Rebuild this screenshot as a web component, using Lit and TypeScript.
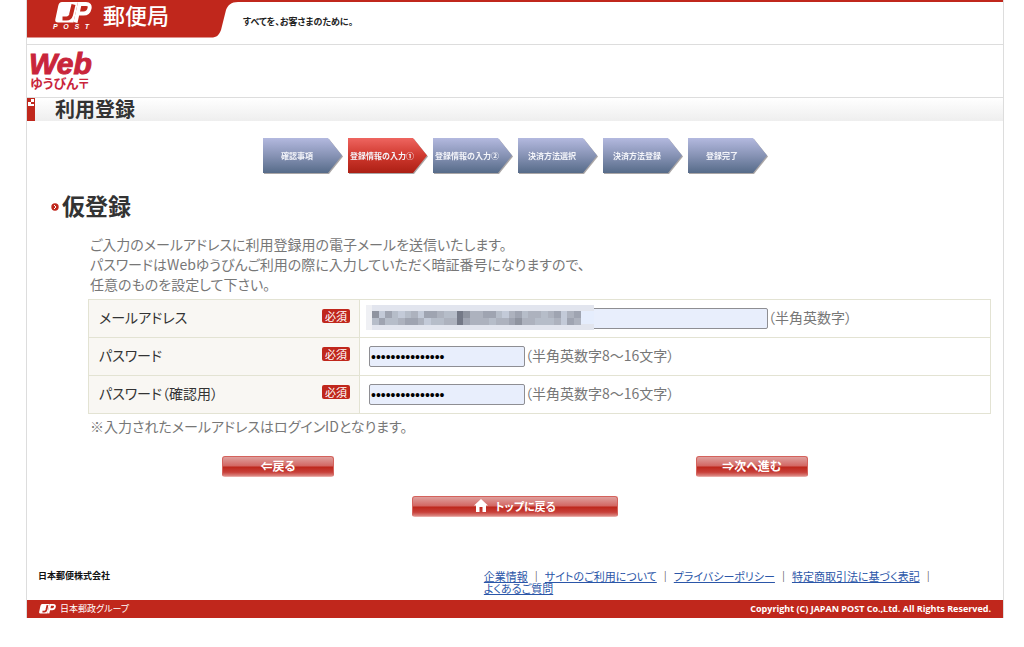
import { LitElement, html, css, svg } from "lit";
import { customElement, property } from "lit/decorators.js";

interface Step {
  label: string;
  current?: boolean;
}

const STEPS: Step[] = [
  { label: "確認事項" },
  { label: "登録情報の入力①", current: true },
  { label: "登録情報の入力②" },
  { label: "決済方法選択" },
  { label: "決済方法登録" },
  { label: "登録完了" },
];

const FOOTER_LINKS = [
  "企業情報",
  "サイトのご利用について",
  "プライバシーポリシー",
  "特定商取引法に基づく表記",
];

// Grey levels of the mosaic that hides the address, one digit per cell (0 = lightest).
const MOSAIC = ["51421231443226533442134233234134", "24223443122336433323345332223143"];
const SHADES = ["#dde0e9", "#c3cad8", "#b6bdc9", "#adb2be", "#9fa4b1", "#8f94a0", "#747987"];

@customElement("jp-mark")
class JpMark extends LitElement {
  static styles = css`
    :host { display: block; }
    svg { display: block; width: 100%; height: auto; }
  `;
  render() {
    return html`
      <svg viewBox="0 0 37 21" aria-hidden="true">
        <path fill="#fff" d="M7 0H23L18.5 20.5H3Q-.5 20.5 .4 17L3.2 4Q4 0 7 0Z" />
        <path fill="none" stroke="#c0271c" stroke-width="4" d="M18.500 2.500L16 13Q15 16.500 11.500 16.500H7.500" />
        <path fill="none" stroke="#fff" stroke-width="4" d="M20.500 20.500L24.600 2H31Q35.500 2 34.500 6.500Q33.500 11.500 28.500 11.500H23" />
      </svg>`;
  }
}

@customElement("step-arrow")
class StepArrow extends LitElement {
  @property() label = "";
  @property({ type: Boolean }) current = false;
  static styles = css`
    :host { display: block; filter: drop-shadow(1px 1px 0 #aaa6a6); }
    .arrow {
      display: flex;
      align-items: center;
      justify-content: center;
      width: 79px;
      height: 35px;
      padding: 1px 11px 0 0;
      box-sizing: border-box;
      clip-path: polygon(0 0, 65px 0, 100% 50%, 65px 100%, 0 100%);
      background: linear-gradient(#b3b9df, #8793b5 50%, #566b89);
      color: #f4f5fa;
      font-size: 8px;
      line-height: 12px;
      font-weight: 700;
      font-feature-settings: normal;
      white-space: nowrap;
    }
    .current { background: linear-gradient(#ee6560, #d0392f 50%, #ac1f14); }
  `;
  render() {
    return html`<span class="arrow ${this.current ? "current" : ""}">${this.label}</span>`;
  }
}

@customElement("app-root")
class AppRoot extends LitElement {
  static styles = css`
    :host {
      display: block;
      background: #fff;
      color: #777;
      font-family: "Noto Sans CJK JP", sans-serif;
      font-feature-settings: "palt";
      font-size: 14px;
      line-height: 20px;
    }
    * { box-sizing: border-box; }
    .page { margin: 0 20px 0 26px; border: solid #ddd; border-width: 0 1px; }
    .brand { display: grid; grid-template-columns: 216px 1fr; height: 45px; border-bottom: 1px solid #ddd; background: linear-gradient(#c0271c 2px, #fff 2px); }
    .tab { display: grid; }
    .tab > * { grid-area: 1 / 1; }
    .tab-shape { display: block; width: 211px; height: 38px; }
    .tab-content { display: flex; padding: 2px 0 0 26px; color: #fff; }
    .post { width: 38px; }
    .post-mark { width: 37px; margin-left: 2px; }
    .post-name { font: italic 700 7px/8px "Liberation Sans", sans-serif; display: flex; justify-content: space-between; padding-right: 2px; }
    .office { font-size: 22px; line-height: 24px; font-weight: 500; margin-left: 12px; }
    .slogan { margin: 16px 0 0; color: #222; font-size: 9px; line-height: 12px; font-weight: 700; }
    .service { height: 52px; padding: 5px 0 0 2px; color: #c9253b; }
    .web { font: italic 700 30px/27px "Liberation Sans", sans-serif; -webkit-text-stroke: 1px #c9253b; }
    .yubin { display: block; font-size: 13px; line-height: 11px; font-weight: 700; padding-left: 1px; }
    .title { display: flex; height: 24px; border-top: 1px solid #ddd; background: linear-gradient(#fff, #eee); }
    .flag { width: 8px; height: 23px; }
    h1 { margin: 0 0 0 20px; color: #333; font-size: 20px; line-height: 22px; font-weight: 700; }
    .steps { display: flex; justify-content: center; gap: 6px; margin: 0; padding: 17px 0 0; list-style: none; }
    h2 { display: flex; align-items: center; gap: 3px; margin: 14px 0 0 24px; color: #333; font-size: 23px; line-height: 36px; font-weight: 700; }
    .bullet { width: 8px; height: 8px; margin-top: 3px; }
    .body { margin: 11px 12px 0 61px; }
    p { margin: 0; }
    .lead, .note { padding-left: 2px; }
    table { width: 100%; margin-top: 5px; border-collapse: collapse; }
    th, td { border: 1px solid #e3e3d3; height: 38px; padding: 0 9px; text-align: left; font-weight: 400; }
    th { width: 271px; padding: 0 9px 3px 10px; background: #f9f7f3; color: #333; }
    .label { display: flex; justify-content: space-between; align-items: center; }
    .required { background: #c0271c; color: #fff; border-radius: 2px; font-size: 11px; line-height: 14px; padding: 0 3px; margin-bottom: 3px; font-feature-settings: normal; }
    .field { display: flex; align-items: center; position: relative; }
    .hint { margin-bottom: 3px; }
    input { width: 156px; height: 21px; padding: 1px; border: 1px solid #8e8e93; border-radius: 2px; background: #e8eefc; color: #000; font: 14px "Liberation Sans", sans-serif; }
    .mail { width: 399px; min-width: 0; }
    .mosaic { position: absolute; left: -3px; top: -2px; width: 228px; height: 25px; }
    .note { margin-top: 2px; }
    .actions { display: grid; grid-template-columns: 1fr 1fr; justify-items: center; padding: 0 14px; margin-top: 20px; }
    .top { display: flex; justify-content: center; margin-top: 19px; }
    button {
      display: flex; align-items: center; justify-content: center; gap: 7px;
      width: 112px; height: 21px; padding: 0 0 2px; border: 1px solid #d4625c; border-bottom-color: #e9aaa6; border-radius: 3px;
      background: linear-gradient(#dfa09e, #d26561 48%, #bd261b 52%, #c8403a 80%, #dc8984);
      color: #fff; font-family: inherit; font-feature-settings: inherit; font-size: 12px; line-height: 16px; font-weight: 700;
    }
    .wide { width: 206px; font-size: 11px; }
    .home { width: 14px; height: 13px; margin-bottom: 1px; }
    .foot { display: grid; grid-template-columns: 22fr 25fr; height: 83px; padding-top: 53px; }
    .company { color: #111; font-size: 9px; line-height: 12px; font-weight: 700; padding-left: 11px; }
    .links { font-size: 11px; line-height: 12px; }
    a { color: #2b56a8; text-decoration: underline; white-space: nowrap; }
    .bar { margin: 0 3px; color: #333; font-weight: 700; }
    .legal { display: flex; align-items: center; height: 18px; padding: 0 12px; background: #c0271c; color: #fff; font-size: 9px; line-height: 12px; }
    .legal-mark { width: 17px; margin-right: 4px; }
    .copyright { margin-left: auto; font: 700 9px/12px "Open Sans", sans-serif; }
  `;

  private renderMosaic() {
    return html`<svg class="mosaic" viewBox="0 0 228 25" preserveAspectRatio="none" shape-rendering="crispEdges" aria-hidden="true">
      <rect width="228" height="25" fill="#e2e5ee" />
      <rect width="6" height="25" fill="#eff0f4" />
      <rect x="215" y="6" width="13" height="13" fill="#e5edfd" />
      ${MOSAIC.map((row, r) =>
        [...row].map((c, i) => svg`<rect x=${6 + i * 6.5} y=${6 + r * 6.5} width="7" height="7" fill=${SHADES[Number(c)]} />`)
      )}
    </svg>`;
  }

  private renderPassword(id: string, label: string) {
    return html`<tr>
      <th scope="row"><span class="label"><label for=${id}>${label}</label><span class="required">必須</span></span></th>
      <td><span class="field"><input id=${id} type="password" value="abcdefghijklmno" /><span class="hint">（半角英数字8～16文字）</span></span></td>
    </tr>`;
  }

  render() {
    return html`
      <div class="page">
        <header>
          <div class="brand">
            <div class="tab">
              <svg class="tab-shape" viewBox="0 0 211 38" aria-hidden="true">
                <path fill="#c0271c" d="M0 0H211V2C204 2 201 5 199 10L194 30C192 35 190 37.500 184 37.500H0Z" />
              </svg>
              <div class="tab-content">
                <div class="post">
                  <jp-mark class="post-mark"></jp-mark>
                  <span class="post-name"><span>P</span><span>O</span><span>S</span><span>T</span></span>
                </div>
                <span class="office">郵便局</span>
              </div>
            </div>
            <p class="slogan">すべてを、お客さまのために。</p>
          </div>
          <div class="service"><div class="web">Web</div><span class="yubin">ゆうびん〒</span></div>
          <div class="title">
            <svg class="flag" viewBox="0 0 8 23" aria-hidden="true">
              <path fill="#c0271c" d="M0 0H8V23H0Z" />
              <path fill="#fff" d="M4 1H7V4H4ZM1 4H4V8H1ZM4 6H7V8H4Z" />
            </svg>
            <h1>利用登録</h1>
          </div>
        </header>
        <main>
          <ol class="steps">
            ${STEPS.map((s) => html`<li><step-arrow .label=${s.label} .current=${!!s.current}></step-arrow></li>`)}
          </ol>
          <h2>
            <svg class="bullet" viewBox="0 0 8 8" aria-hidden="true">
              <circle cx="4" cy="4" r="3.700" fill="#c0271c" />
              <path d="M3 2L5 4L3 6" fill="none" stroke="#fff" />
            </svg>
            仮登録
          </h2>
          <form class="body" @submit=${(e: Event) => e.preventDefault()}>
            <p class="lead">
              ご入力のメールアドレスに利用登録用の電子メールを送信いたします。<br />
              パスワードはWebゆうびんご利用の際に入力していただく暗証番号になりますので、<br />
              任意のものを設定して下さい。
            </p>
            <table>
              <tbody>
                <tr>
                  <th scope="row"><span class="label"><label for="mail">メールアドレス</label><span class="required">必須</span></span></th>
                  <td><span class="field"><input id="mail" class="mail" type="email" />${this.renderMosaic()}<span class="hint">（半角英数字）</span></span></td>
                </tr>
                ${this.renderPassword("password", "パスワード")}
                ${this.renderPassword("confirm", "パスワード（確認用）")}
              </tbody>
            </table>
            <p class="note">※入力されたメールアドレスはログインIDとなります。</p>
          </form>
          <div class="actions">
            <button type="button">⇐戻る</button>
            <button type="button">⇒次へ進む</button>
          </div>
          <div class="top">
            <button type="button" class="wide">
              <svg class="home" viewBox="0 0 14 13" aria-hidden="true"><path fill="#fff" d="M7 0L14 6.500H12V13H8.500V8H5.500V13H2V6.500H0Z" /></svg>
              トップに戻る
            </button>
          </div>
        </main>
        <footer>
          <div class="foot">
            <span class="company">日本郵便株式会社</span>
            <nav class="links">
              ${FOOTER_LINKS.map((t) => html`<a href="#">${t}</a><span class="bar">｜</span>`)}
              <a href="#">よくあるご質問</a>
            </nav>
          </div>
          <div class="legal">
            <jp-mark class="legal-mark"></jp-mark>
            <span>日本郵政グループ</span>
            <span class="copyright">Copyright (C) JAPAN POST Co.,Ltd. All Rights Reserved.</span>
          </div>
        </footer>
      </div>
    `;
  }
}
